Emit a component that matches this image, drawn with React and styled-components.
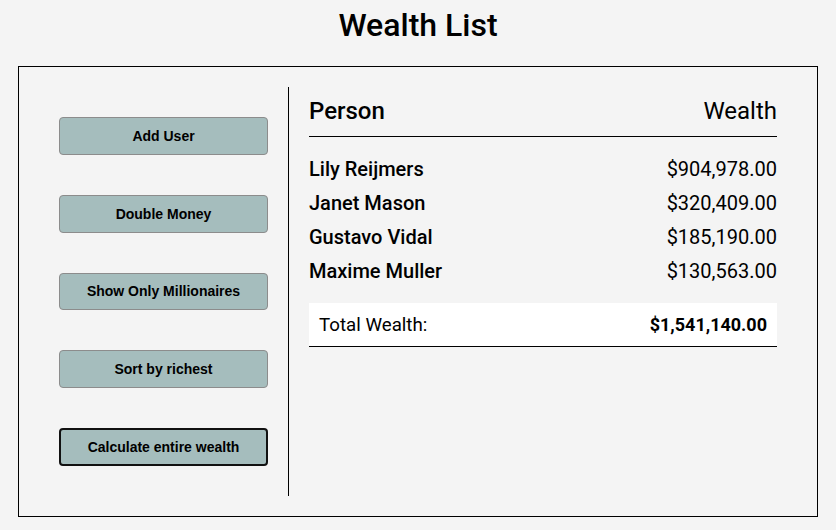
import React from "react";
import styled, { createGlobalStyle } from "styled-components";

const Global = createGlobalStyle`
  * { box-sizing: border-box; }
  body {
    margin: 0;
    background: #f4f4f4;
    font-family: Roboto, "Liberation Sans", sans-serif;
    color: #000;
  }
`;

const Title = styled.h1`
  margin: 0;
  height: 66px;
  padding-top: 5px;
  text-align: center;
  font-size: 32px;
  font-weight: 500;
  line-height: 40px;
`;

const Container = styled.div`
  width: 800px;
  height: 451px;
  margin: 0 auto;
  border: 1px solid #000;
  padding: 20px;
  display: flex;
`;

const Aside = styled.aside`
  width: 250px;
  border-right: 1px solid #000;
  padding: 30px 20px;
  display: flex;
  flex-direction: column;
  gap: 40px;
`;

const Button = styled.button`
  height: 38px;
  width: 100%;
  background: #a5bdbd;
  border: ${(p) => (p.$focused ? "2px solid #111" : "1px solid #8c8c8c")};
  border-radius: 4px;
  font-family: "Liberation Sans", Arial, sans-serif;
  font-weight: bold;
  font-size: 14px;
  color: #000;
  cursor: pointer;
`;

const Main = styled.main`
  flex: 1;
  padding: 0 20px;
`;

const Header = styled.h2`
  margin: 10px 0 0;
  display: flex;
  justify-content: space-between;
  font-size: 24px;
  line-height: 28px;
  padding-bottom: 11px;
  border-bottom: 1px solid #000;
  font-weight: 500;
`;

const HeaderRight = styled.span`
  font-weight: 400;
`;

const List = styled.div`
  padding-top: 20px;
  display: flex;
  flex-direction: column;
  gap: 10px;
`;

const Row = styled.div`
  display: flex;
  justify-content: space-between;
  font-size: 20px;
  line-height: 24px;
`;

const Name = styled.strong`
  font-weight: 500;
`;

const Money = styled.span`
  font-weight: 400;
`;

const Total = styled.div`
  margin-top: 20px;
  background: #fff;
  height: 44px;
  border-bottom: 1px solid #000;
  padding: 0 10px;
  display: flex;
  align-items: center;
  justify-content: space-between;
  font-size: 18.72px;
`;

const TotalLabel = styled.span`
  font-weight: 400;
`;

const TotalAmount = styled.strong`
  font-weight: 700;
  font-size: 18px;
`;

const people = [
  ["Lily Reijmers", "$904,978.00"],
  ["Janet Mason", "$320,409.00"],
  ["Gustavo Vidal", "$185,190.00"],
  ["Maxime Muller", "$130,563.00"],
];

const buttons = [
  "Add User",
  "Double Money",
  "Show Only Millionaires",
  "Sort by richest",
  "Calculate entire wealth",
];

export default function App() {
  return (
    <>
      <Global />
      <Title>Wealth List</Title>
      <Container>
        <Aside>
          {buttons.map((b, i) => (
            <Button key={b} $focused={i === buttons.length - 1}>
              {b}
            </Button>
          ))}
        </Aside>
        <Main>
          <Header>
            <span>Person</span>
            <HeaderRight>Wealth</HeaderRight>
          </Header>
          <List>
            {people.map(([n, m]) => (
              <Row key={n}>
                <Name>{n}</Name>
                <Money>{m}</Money>
              </Row>
            ))}
          </List>
          <Total>
            <TotalLabel>Total Wealth:</TotalLabel>
            <TotalAmount>$1,541,140.00</TotalAmount>
          </Total>
        </Main>
      </Container>
    </>
  );
}
